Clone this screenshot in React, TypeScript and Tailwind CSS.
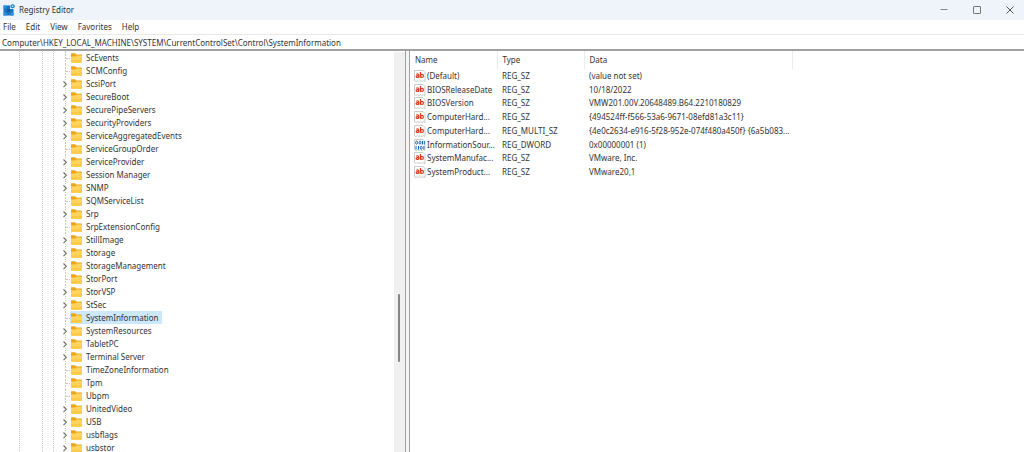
type TreeKey = { name: string; children?: boolean };
type RegValue = { name: string; type: string; data: string };

const SELECTED = "SystemInformation";

const MENU = ["File", "Edit", "View", "Favorites", "Help"];

const KEYS: TreeKey[] = [
  { name: "ScEvents" },
  { name: "SCMConfig" },
  { name: "ScsiPort", children: true },
  { name: "SecureBoot", children: true },
  { name: "SecurePipeServers", children: true },
  { name: "SecurityProviders", children: true },
  { name: "ServiceAggregatedEvents", children: true },
  { name: "ServiceGroupOrder" },
  { name: "ServiceProvider", children: true },
  { name: "Session Manager", children: true },
  { name: "SNMP", children: true },
  { name: "SQMServiceList" },
  { name: "Srp", children: true },
  { name: "SrpExtensionConfig" },
  { name: "StillImage", children: true },
  { name: "Storage", children: true },
  { name: "StorageManagement", children: true },
  { name: "StorPort" },
  { name: "StorVSP", children: true },
  { name: "StSec", children: true },
  { name: "SystemInformation" },
  { name: "SystemResources", children: true },
  { name: "TabletPC", children: true },
  { name: "Terminal Server", children: true },
  { name: "TimeZoneInformation" },
  { name: "Tpm" },
  { name: "Ubpm" },
  { name: "UnitedVideo", children: true },
  { name: "USB", children: true },
  { name: "usbflags", children: true },
  { name: "usbstor", children: true },
];

const VALUES: RegValue[] = [
  { name: "(Default)", type: "REG_SZ", data: "(value not set)" },
  { name: "BIOSReleaseDate", type: "REG_SZ", data: "10/18/2022" },
  { name: "BIOSVersion", type: "REG_SZ", data: "VMW201.00V.20648489.B64.2210180829" },
  { name: "ComputerHard...", type: "REG_SZ", data: "{494524ff-f566-53a6-9671-08efd81a3c11}" },
  { name: "ComputerHard...", type: "REG_MULTI_SZ", data: "{4e0c2634-e916-5f28-952e-074f480a450f} {6a5b083..." },
  { name: "InformationSour...", type: "REG_DWORD", data: "0x00000001 (1)" },
  { name: "SystemManufac...", type: "REG_SZ", data: "VMware, Inc." },
  { name: "SystemProduct...", type: "REG_SZ", data: "VMware20,1" },
];

function AppIcon() {
  return (
    <svg width="12" height="12" viewBox="0 0 12 12" aria-hidden="true">
      <path d="M0.5 1.500h6.500v3.500h3.500v6.500h-10z" fill="#1573c4" />
      <path d="M0.500 1.500h3v3h-3zM0.500 8.500h3v3h-3z" fill="#2f8fdc" />
      <path d="M4 5h3v3h-3z" fill="#0b5cab" />
      <path d="M7.500 8.500h3v3h-3z" fill="#2f8fdc" />
      <path d="M9.500 0l2.200 1.200v2l-2.200 1.200l-2-1.200v-2z" fill="#1b7fd0" />
      <circle cx="9.600" cy="2.200" r="0.900" fill="#bfe3fb" />
    </svg>
  );
}

function Connector({ expandable }: { expandable?: boolean }) {
  return (
    <svg className="shrink-0" width="16" height="13" viewBox="0 0 16 13" aria-hidden="true">
      {expandable ? (
        <>
          <path d="M11.500 0v3M11.500 11v2" stroke="#c4c4c4" strokeDasharray="1 1" />
          <path d="M9.500 4.500l2.800 2.800l-2.800 2.800" fill="none" stroke="#707070" strokeWidth="1.200" />
        </>
      ) : (
        <>
          <path d="M11.500 0v13" stroke="#c8c8c8" strokeDasharray="2 1" />
          <path d="M12 7.500h4" stroke="#c8c8c8" strokeDasharray="2 1" />
        </>
      )}
    </svg>
  );
}

function FolderIcon() {
  return (
    <svg className="shrink-0" width="12" height="10" viewBox="0 0 12 10" aria-hidden="true">
      <path d="M1 0.800q0-0.500 0.500-0.500h3.500l1.200 1.200h5.300q0.500 0 0.500 0.500v2h-11z" fill="#eda616" />
      <path d="M1 3.500h4.500l1.200-1h5.300v6.500q0 0.700-0.700 0.700h-9.600q-0.700 0-0.700-0.700z" fill="#ffd45c" />
      <path d="M1 7h11v2q0 0.700-0.700 0.700h-9.600q-0.700 0-0.700-0.700z" fill="#fdca48" />
    </svg>
  );
}

function ValueIcon({ binary }: { binary: boolean }) {
  return (
    <svg className="shrink-0" width="12" height="12" viewBox="0 0 12 12" aria-hidden="true">
      <path d="M0.500 0.500h8.500l2 2v9l-1.500-0.800l-1.500 0.800l-1.500-0.800l-1.500 0.800l-1.500-0.800l-1.500 0.800l-1.500-0.800z" fill="#fff" stroke="#b4b4b4" strokeWidth="0.700" />
      {binary ? (
        <g fill="none" stroke="#1565b8">
          <ellipse cx="2.600" cy="3.600" rx="1" ry="1.500" />
          <ellipse cx="6" cy="3.600" rx="1" ry="1.500" />
          <path d="M8.500 2v3.500M10.300 2v3.500" />
          <path d="M2 7v3.500M4.500 7v3.500M9.900 7v3.500" />
          <ellipse cx="7.200" cy="8.700" rx="1" ry="1.500" />
        </g>
      ) : (
        <g fill="none" stroke="#d93a20" strokeWidth="1.200">
          <path d="M2.200 4.200q2.600-0.800 2.600 1v2.400" />
          <ellipse cx="3.400" cy="6.400" rx="1.300" ry="0.900" />
          <path d="M6.500 2v5.700" />
          <ellipse cx="8" cy="5.900" rx="1.400" ry="1.500" />
        </g>
      )}
    </svg>
  );
}

function TitleBar() {
  return (
    <header className="flex h-5 shrink-0 items-center justify-between bg-[#eef4f9] pl-[3px]">
      <div className="flex items-center gap-1">
        <AppIcon />
        <h1>Registry Editor</h1>
      </div>
      <div className="flex h-full">
        <button aria-label="Minimize" className="flex w-7 items-center justify-center">
          <svg width="8" height="8" viewBox="0 0 8 8"><path d="M0.500 3.500h7" stroke="#888" /></svg>
        </button>
        <button aria-label="Maximize" className="flex w-[38px] items-center justify-center">
          <svg width="8" height="8" viewBox="0 0 8 8"><rect x="0.500" y="0.500" width="7" height="7" rx="0.500" fill="none" stroke="#777" /></svg>
        </button>
        <button aria-label="Close" className="flex w-7 items-center justify-center">
          <svg width="8" height="8" viewBox="0 0 8 8"><path d="M0.500 0.500l7 7M7.500 0.500l-7 7" stroke="#555" /></svg>
        </button>
      </div>
    </header>
  );
}

function KeyTree() {
  return (
    <section className="flex w-[406px] shrink-0 overflow-hidden border-r border-[#a0a0a0]">
      <div className="w-5 shrink-0 border-r border-dotted border-[#c8c8c8]" />
      <div className="w-[23px] shrink-0 border-r border-dotted border-[#c8c8c8]" />
      <div className="w-[11px] shrink-0 border-r border-dotted border-[#c8c8c8]" />
      <ul role="tree" aria-label="Registry keys" className="min-w-0 flex-1">
        {KEYS.map((key) => (
          <li
            key={key.name}
            role="treeitem"
            aria-selected={key.name === SELECTED}
            className="flex h-[13px] items-center"
          >
            <Connector expandable={key.children} />
            <span
              className={
                key.name === SELECTED
                  ? "flex h-[13px] items-center gap-1 bg-[#cce8ff] pr-1"
                  : "flex h-[13px] items-center gap-1 pr-1"
              }
            >
              <FolderIcon />
              {key.name}
            </span>
          </li>
        ))}
      </ul>
      <div className="mt-px w-[11px] shrink-0 bg-[#f0f0f0] pl-1">
        <div className="mt-[242px] h-[68px] w-0.5 rounded-full bg-[#868686]" />
      </div>
    </section>
  );
}

function ValueList() {
  return (
    <section className="min-w-0 flex-1 overflow-hidden">
      <table className="h-[128px] w-[382px] table-fixed border-collapse text-left whitespace-nowrap">
        <colgroup>
          <col className="w-[87px]" />
          <col className="w-[87px]" />
          <col className="w-[208px]" />
        </colgroup>
        <thead>
          <tr className="h-[18px]">
            <th className="border-r border-[#ececec] p-0 pl-[5px] font-normal">Name</th>
            <th className="border-r border-[#ececec] p-0 pl-[5px] font-normal">Type</th>
            <th className="border-r border-[#ececec] p-0 pl-[5px] font-normal">Data</th>
          </tr>
        </thead>
        <tbody>
          {VALUES.map((value, i) => (
            <tr key={i}>
              <td className="p-0 pl-1">
                <div className="flex items-center gap-px">
                  <ValueIcon binary={value.type === "REG_DWORD"} />
                  {value.name}
                </div>
              </td>
              <td className="p-0 pl-[5px]">{value.type}</td>
              <td className="p-0 pl-[5px]">{value.data}</td>
            </tr>
          ))}
        </tbody>
      </table>
    </section>
  );
}

export default function App() {
  return (
    <div className="flex h-screen flex-col overflow-hidden bg-white font-['Noto_Sans','Open_Sans',sans-serif] text-[8px] leading-3 text-[#333]">
      <TitleBar />
      <nav className="flex h-[15px] shrink-0 items-center gap-2.5 border-b border-[#e8e8e8] pl-[3px]">
        {MENU.map((item) => (
          <button key={item}>{item}</button>
        ))}
      </nav>
      <input
        aria-label="Address"
        className="h-[14px] w-full shrink-0 px-0.5 outline-none"
        defaultValue="Computer\HKEY_LOCAL_MACHINE\SYSTEM\CurrentControlSet\Control\SystemInformation"
      />
      <main className="flex min-h-0 flex-1 border-t-2 border-[#a0a0a0]">
        <KeyTree />
        <div className="w-1 shrink-0 border-r border-[#a0a0a0] bg-[#f4f4f4]" />
        <ValueList />
      </main>
    </div>
  );
}
